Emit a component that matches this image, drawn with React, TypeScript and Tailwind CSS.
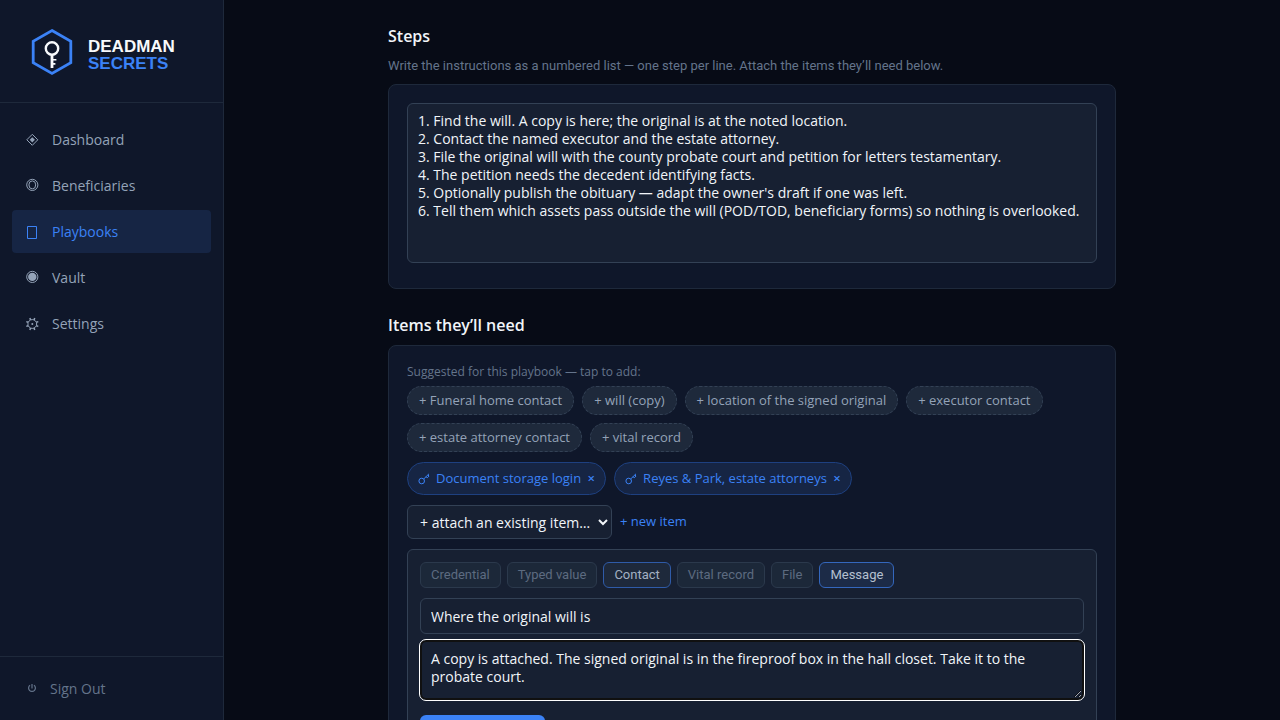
import React, { useState } from 'react';

const suggested = [
  'Funeral home contact',
  'will (copy)',
  'location of the signed original',
  'executor contact',
  'estate attorney contact',
  'vital record',
];

const itemKinds = ['Credential', 'Typed value', 'Contact', 'Vital record', 'File', 'Message'];

const initialSteps = `1. Find the will. A copy is here; the original is at the noted location.
2. Contact the named executor and the estate attorney.
3. File the original will with the county probate court and petition for letters testamentary.
4. The petition needs the decedent identifying facts.
5. Optionally publish the obituary — adapt the owner's draft if one was left.
6. Tell them which assets pass outside the will (POD/TOD, beneficiary forms) so nothing is overlooked.`;

const DiamondIcon = () => (
  <svg width="12" height="14" viewBox="0 0 12 14" fill="none" stroke="currentColor" className="overflow-visible">
    <path d="M6.3 1.3 11.8 6.8 6.3 12.3.8 6.8Z" />
    <path d="M6.3 4.2 8.9 6.8 6.3 9.4 3.7 6.8Z" fill="currentColor" stroke="none" />
  </svg>
);

const RingsIcon = () => (
  <svg width="12" height="14" viewBox="0 0 12 14" fill="none" stroke="currentColor" className="overflow-visible">
    <circle cx="6.3" cy="5.9" r="5.6" />
    <ellipse cx="6.3" cy="5.9" rx="3.4" ry="4" />
  </svg>
);

const PageIcon = () => (
  <svg width="12" height="14" viewBox="0 0 12 14" fill="none" stroke="currentColor">
    <path d="M1.5 1.5h9v12h-9z" />
  </svg>
);

const VaultIcon = () => (
  <svg width="12" height="14" viewBox="0 0 12 14" fill="none" stroke="currentColor" className="overflow-visible">
    <circle cx="6.3" cy="5.9" r="5.6" />
    <circle cx="6.3" cy="5.9" r="4.2" fill="currentColor" stroke="none" />
  </svg>
);

const GearIcon = () => (
  <svg width="12" height="14" viewBox="0 0 12 14" fill="none" stroke="currentColor" className="overflow-visible">
    <circle cx="6.3" cy="7" r="4.4" />
    <path
      d="M4.5 2.9 3.9 1M8.1 2.9 8.7 1M4.5 11.1 3.9 13M8.1 11.1l.6 1.9M2.2 5.2.3 4.6M2.2 8.8.3 9.4M10.4 5.2l1.9-.6M10.4 8.8l1.9.6"
      strokeWidth="1.5"
    />
    <circle cx="6.3" cy="7" r="1" fill="currentColor" stroke="none" />
  </svg>
);

const KeyIcon = () => (
  <svg width="12" height="12" viewBox="0 0 12 12" fill="none" stroke="currentColor" className="shrink-0">
    <circle cx="3.7" cy="8" r="2.8" />
    <path d="M5.7 6 11 .8M8 3.7l1.2 1.2 1.8-1.8-1-1.2" />
  </svg>
);

const navItems = [
  { label: 'Dashboard', Icon: DiamondIcon },
  { label: 'Beneficiaries', Icon: RingsIcon },
  { label: 'Playbooks', Icon: PageIcon },
  { label: 'Vault', Icon: VaultIcon },
  { label: 'Settings', Icon: GearIcon },
];

const Sidebar: React.FC = () => (
  <aside className="flex w-56 shrink-0 flex-col border-r border-[#1e293b] bg-[#0f172a]">
    <div className="flex h-[103px] items-center gap-4 border-b border-[#1e293b] px-8">
      <svg width="40" height="46" viewBox="0 0 40 46" fill="none" className="overflow-visible">
        <path d="M20 2.5 38.8 13.3v21.4L20 45.5 1.2 34.7V13.3Z" stroke="#3b82f6" strokeWidth="2.8" />
        <circle cx="20" cy="20.5" r="6.2" stroke="#f8fafc" strokeWidth="2.4" />
        <path d="M18.6 26.5h2.8v4.4h3v1.7h-3v2.4h2v1.7h-2V40h-2.8Z" fill="#f8fafc" />
      </svg>
      <div className="pt-2 font-['Liberation_Sans',sans-serif] text-[17px] leading-[17px] font-bold">
        <div className="text-[#f8fafc]">DEADMAN</div>
        <div className="text-[#3b82f6]">SECRETS</div>
      </div>
    </div>

    <nav className="flex flex-1 flex-col gap-[3px] px-3 pt-[15px]">
      {navItems.map(({ label, Icon }) => (
        <a
          key={label}
          href="#"
          className={`flex h-[43px] items-center gap-[14px] rounded px-[14px] text-sm ${
            label === 'Playbooks' ? 'bg-[#162544] text-[#3b82f6]' : 'text-[#94a3b8]'
          }`}
        >
          <Icon />
          {label}
        </a>
      ))}
    </nav>

    <div className="flex h-16 items-center border-t border-[#1e293b] px-7">
      <button className="flex items-center gap-[14px] text-sm text-[#64748b]">
        <svg width="8" height="10" viewBox="0 0 8 10" fill="none" stroke="currentColor" strokeWidth="1.2">
          <path d="M4 0v4.5M2 1.3a3.4 3.4 0 1 0 4 0" />
        </svg>
        Sign Out
      </button>
    </div>
  </aside>
);

const App: React.FC = () => {
  const [steps, setSteps] = useState(initialSteps);
  const [title, setTitle] = useState('Where the original will is');
  const [message, setMessage] = useState(
    'A copy is attached. The signed original is in the fireproof box in the hall closet. Take it to the probate court.'
  );
  const [attached, setAttached] = useState(['Document storage login', 'Reyes & Park, estate attorneys']);

  return (
    <div className="flex h-screen overflow-hidden bg-[#070b16] font-['Open_Sans','Noto_Sans',sans-serif] text-[#f1f5f9]">
      <Sidebar />

      <main className="min-w-0 flex-1 overflow-hidden px-8">
        <div className="mx-auto max-w-[728px] pt-6">
          {/* Steps */}
          <h2 className="text-base leading-6 font-semibold">Steps</h2>
          <p className="mt-2 font-['Roboto',sans-serif] text-[13px] leading-5 text-[#64748b]">
            Write the instructions as a numbered list — one step per line. Attach the items they’ll need below.
          </p>
          <section className="mt-2 h-[205px] rounded-lg border border-[#1e293b] bg-[#0f172a] p-[18px]">
            <textarea
              aria-label="Steps"
              value={steps}
              onChange={(e) => setSteps(e.target.value)}
              className="block h-40 w-full resize-none rounded-md border border-[#334155] bg-[#172032] px-[10px] py-2 text-sm leading-[18px]"
            />
          </section>

          {/* Items */}
          <h2 className="mt-6 text-base leading-6 font-semibold">Items they’ll need</h2>
          <section className="mt-2 rounded-lg border border-[#1e293b] bg-[#0f172a] p-[18px]">
            <p className="text-xs leading-4 text-[#64748b]">Suggested for this playbook — tap to add:</p>
            <div className="mt-[6px] flex flex-wrap gap-2">
              {suggested.map((name) => (
                <button
                  key={name}
                  className="h-[29px] rounded-full border border-dashed border-[#334155] bg-[#1e293b] px-[11px] text-[13px] text-[#94a3b8]"
                >
                  + {name}
                </button>
              ))}
            </div>

            <div className="mt-[10px] flex flex-wrap gap-2">
              {attached.map((name) => (
                <div
                  key={name}
                  className="flex h-[33px] items-center rounded-full border border-[#1e4080] bg-[#162544] px-[10px] text-[13px] text-[#3b82f6]"
                >
                  <KeyIcon />
                  <span className="ml-[6px]">{name}</span>
                  <button
                    aria-label={`Remove ${name}`}
                    className="ml-[6px] w-2 font-semibold"
                    onClick={() => setAttached(attached.filter((a) => a !== name))}
                  >
                    ×
                  </button>
                </div>
              ))}
            </div>

            <div className="mt-[10px] flex items-center gap-2">
              <select
                aria-label="Attach an existing item"
                className="h-[34px] w-[205px] rounded-md border border-[#334155] bg-[#172032] pr-1 pl-2 text-sm"
              >
                <option>+ attach an existing item…</option>
              </select>
              <button className="text-[13px] text-[#3b82f6]">+ new item</button>
            </div>

            <div className="mt-[10px] rounded-md border border-[#334155] bg-[#172032] p-3">
              <div className="flex flex-wrap gap-[6px]">
                {itemKinds.map((kind) => (
                  <button
                    key={kind}
                    className={`h-[26px] rounded-md border px-[10px] font-['Roboto',sans-serif] text-[13px] ${
                      kind === 'Message'
                        ? 'border-[#3467bd] bg-[#1c2b47] text-[#b4c0d0]'
                        : kind === 'Contact'
                          ? 'border-[#2f5ba8] bg-[#1e293b] text-[#a3b0c2]'
                          : 'border-[#2b394c] bg-[#1c2839] text-[#5d6b80]'
                    }`}
                  >
                    {kind}
                  </button>
                ))}
              </div>
              <input
                aria-label="Item name"
                value={title}
                onChange={(e) => setTitle(e.target.value)}
                className="mt-[10px] block h-9 w-full rounded-md border border-[#334155] bg-[#172032] px-[10px] text-sm"
              />
              <textarea
                aria-label="Message"
                value={message}
                onChange={(e) => setMessage(e.target.value)}
                className="mt-[6px] block h-[60px] w-full resize-y rounded-md border-2 border-[#101010] bg-[#172032] px-[9px] py-2 text-sm leading-[18px] outline-1 outline-white"
              />
              <button className="mt-[15px] h-11 w-[125px] rounded-md bg-[#3b82f6] text-sm font-semibold text-white">
                Save item
              </button>
            </div>
          </section>
        </div>
      </main>
    </div>
  );
};

export default App;
